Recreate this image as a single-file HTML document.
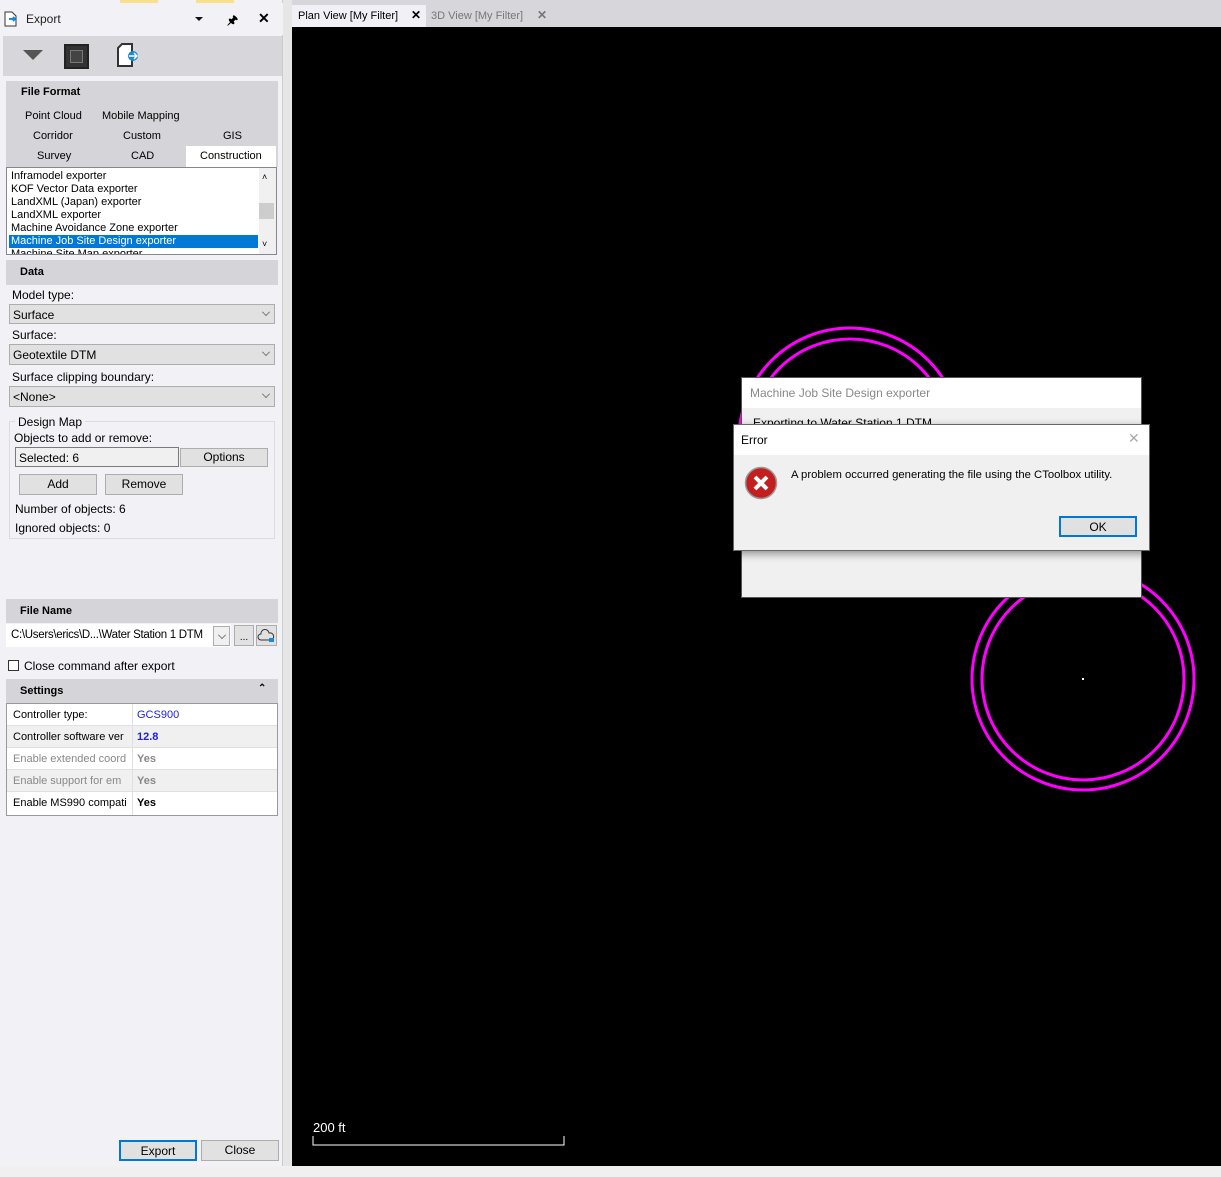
<!DOCTYPE html>
<html><head><meta charset="utf-8"><style>
*{box-sizing:border-box;margin:0;padding:0}
body{width:1221px;height:1177px;position:relative;overflow:hidden;background:#f0f0f0;font-family:"Liberation Sans",sans-serif;font-size:12px;color:#000}
.a{position:absolute}
.sel{background:#e1e1e1;border:1px solid #adadad}
.hdr{background:#d4d4d9;font-weight:bold;font-size:11px;padding-left:14px;line-height:22px}
.btn{background:#e1e1e1;border:1px solid #adadad;text-align:center;font-size:12px}
.chev{position:absolute;right:4px;top:3px;width:8px;height:8px;border-right:1px solid #555;border-bottom:1px solid #555;transform:rotate(45deg) scale(.7)}
</style></head><body>
<div class="a" style="left:0;top:0;width:283px;height:1166px;background:#f2f2f6;border-right:1px solid #ccc"></div>
<div class="a" style="left:283px;top:0;width:9px;height:1166px;background:#e6e6e6"></div>
<div class="a" style="left:120px;top:0;width:38px;height:3px;background:#f8e08c"></div>
<div class="a" style="left:196px;top:0;width:38px;height:3px;background:#f8e08c"></div>
<div class="a" style="left:0;top:3px;width:283px;height:32px;background:#f2f2f6"></div>
<svg class="a" style="left:4px;top:11px" width="14" height="16"><path d="M1 1h7l4 4v10H1z" fill="#fff" stroke="#333"/><path d="M5 8h6M9 6l2 2-2 2" stroke="#1a8ad6" stroke-width="2" fill="none"/></svg>
<div class="a" style="left:26px;top:12px;font-size:12px;color:#222">Export</div>
<div class="a" style="left:195px;top:17px;border:4px solid transparent;border-top:4px solid #111"></div>
<div class="a" style="left:227px;top:11px;font-size:12px;font-weight:bold">&#x1F588;</div>
<div class="a" style="left:258px;top:10px;font-size:14px;font-weight:bold">✕</div>
<div class="a" style="left:3px;top:36px;width:279px;height:40px;background:#d6d6db"></div>
<div class="a" style="left:23px;top:50px;border:10px solid transparent;border-top:10px solid #555;border-bottom:0"></div>
<div class="a" style="left:64px;top:44px;width:25px;height:25px;background:#333;border:2px solid #222"><div style="margin:4px;width:13px;height:13px;background:#444;border:1px solid #777"></div></div>
<svg class="a" style="left:116px;top:43px" width="24" height="27"><path d="M2 5l4-4h10v22H2z" fill="#fff" stroke="#333" stroke-width="2"/><circle cx="17" cy="13" r="5" fill="#1a8ad6"/><path d="M13 13h8M18 10l3 3-3 3" stroke="#fff" stroke-width="1.5" fill="none"/></svg>
<div class="a" style="left:6px;top:81px;width:272px;height:86px;background:#d4d4d9"></div>
<div class="a" style="left:21px;top:86px;font-weight:bold;font-size:11px">File Format</div>
<div class="a" style="left:25px;top:110px;font-size:11px">Point Cloud</div>
<div class="a" style="left:102px;top:110px;font-size:11px">Mobile Mapping</div>
<div class="a" style="left:33px;top:130px;font-size:11px">Corridor</div>
<div class="a" style="left:123px;top:130px;font-size:11px">Custom</div>
<div class="a" style="left:223px;top:130px;font-size:11px">GIS</div>
<div class="a" style="left:37px;top:150px;font-size:11px">Survey</div>
<div class="a" style="left:131px;top:150px;font-size:11px">CAD</div>
<div class="a" style="left:186px;top:146px;width:90px;height:21px;background:#fff"></div>
<div class="a" style="left:200px;top:150px;font-size:11px">Construction</div>
<div class="a" style="left:6px;top:167px;width:271px;height:88px;background:#fff;border:1px solid #828790;overflow:hidden;font-size:11px;line-height:13px">
<div style="padding-left:4px;padding-top:2px">Inframodel exporter<br>KOF Vector Data exporter<br>LandXML (Japan) exporter<br>LandXML exporter<br>Machine Avoidance Zone exporter</div>
<div style="margin-left:2px;width:249px;background:#0078d7;color:#fff;padding-left:2px">Machine Job Site Design exporter</div>
<div style="padding-left:4px">Machine Site Map exporter</div>
<div class="a" style="left:252px;top:0;width:17px;height:86px;background:#f0f0f0"></div>
<div class="a" style="left:252px;top:35px;width:15px;height:16px;background:#cdcdcd"></div>
<div class="a" style="left:255px;top:3px;font-size:9px">˄</div>
<div class="a" style="left:255px;top:70px;font-size:9px">˅</div>
</div>
<div class="a hdr" style="left:6px;top:260px;width:272px;height:25px;line-height:25px">Data</div>
<div class="a" style="left:12px;top:288px">Model type:</div>
<div class="a sel" style="left:9px;top:304px;width:266px;height:20px;padding:3px 3px">Surface<span class="chev"></span></div>
<div class="a" style="left:12px;top:328px">Surface:</div>
<div class="a sel" style="left:9px;top:344px;width:266px;height:21px;padding:3px 3px">Geotextile DTM<span class="chev"></span></div>
<div class="a" style="left:12px;top:370px">Surface clipping boundary:</div>
<div class="a sel" style="left:9px;top:386px;width:266px;height:21px;padding:3px 3px">&lt;None&gt;<span class="chev"></span></div>
<div class="a" style="left:9px;top:421px;width:266px;height:118px;border:1px solid #dcdcdc"></div>
<div class="a" style="left:15px;top:415px;background:#f2f2f6;padding:0 3px">Design Map</div>
<div class="a" style="left:14px;top:431px">Objects to add or remove:</div>
<div class="a" style="left:15px;top:447px;width:164px;height:20px;border:1px solid #7a7a7a;background:#f0f0f0;padding:3px 3px">Selected: 6</div>
<div class="a btn" style="left:180px;top:448px;width:88px;height:19px;line-height:17px">Options</div>
<div class="a btn" style="left:19px;top:474px;width:78px;height:21px;line-height:19px">Add</div>
<div class="a btn" style="left:105px;top:474px;width:78px;height:21px;line-height:19px">Remove</div>
<div class="a" style="left:15px;top:502px">Number of objects: 6</div>
<div class="a" style="left:15px;top:521px">Ignored objects: 0</div>
<div class="a hdr" style="left:6px;top:599px;width:272px;height:24px;line-height:24px">File Name</div>
<div class="a" style="left:6px;top:624px;width:225px;height:23px;background:#fff"></div>
<div class="a" style="left:11px;top:629px;font-size:11.5px;letter-spacing:-0.3px;white-space:nowrap">C:\Users\erics\D...\Water Station 1 DTM</div>
<div class="a" style="left:213px;top:626px;width:17px;height:20px;border:1px solid #adadad;background:#f0f0f0"><span class="chev" style="right:3px;top:4px"></span></div>
<div class="a btn" style="left:234px;top:625px;width:20px;height:21px;line-height:24px;font-size:10px">...</div>
<div class="a btn" style="left:256px;top:625px;width:21px;height:21px"><svg width="19" height="19"><path d="M4 14a3 3 0 010-6 4 4 0 018-1 3 3 0 012 7z" fill="none" stroke="#333"/><rect x="12" y="12" width="5" height="4" fill="#1a8ad6"/></svg></div>
<div class="a" style="left:8px;top:660px;width:11px;height:11px;border:1px solid #333;background:#fff"></div>
<div class="a" style="left:24px;top:659px">Close command after export</div>
<div class="a hdr" style="left:6px;top:679px;width:272px;height:24px;line-height:24px">Settings</div>
<div class="a" style="left:258px;top:683px;font-size:10px;font-weight:bold">⌃</div>
<div class="a" style="left:6px;top:703px;width:272px;height:113px;border:1px solid #999;background:#fff;font-size:11px">
<div style="height:22px;border-bottom:1px solid #e0e0e0;position:relative"><span class="a" style="left:6px;top:5px">Controller type:</span><span class="a" style="left:130px;top:5px;color:#2020e0">GCS900</span></div>
<div style="height:22px;border-bottom:1px solid #e0e0e0;position:relative;background:#f0f0f0"><span class="a" style="left:6px;top:5px">Controller software ver</span><span class="a" style="left:130px;top:5px;color:#2020e0;font-weight:bold">12.8</span></div>
<div style="height:22px;border-bottom:1px solid #e0e0e0;position:relative"><span class="a" style="left:6px;top:5px;color:#888">Enable extended coord</span><span class="a" style="left:130px;top:5px;color:#888;font-weight:bold">Yes</span></div>
<div style="height:22px;border-bottom:1px solid #e0e0e0;position:relative;background:#f0f0f0"><span class="a" style="left:6px;top:5px;color:#888">Enable support for em</span><span class="a" style="left:130px;top:5px;color:#888;font-weight:bold">Yes</span></div>
<div style="height:22px;position:relative"><span class="a" style="left:6px;top:5px">Enable MS990 compati</span><span class="a" style="left:130px;top:5px;font-weight:bold">Yes</span></div>
<div class="a" style="left:125px;top:0;width:1px;height:111px;background:#e0e0e0"></div>
</div>
<div class="a btn" style="left:119px;top:1140px;width:78px;height:21px;line-height:19px;border:2px solid #0078d7">Export</div>
<div class="a btn" style="left:201px;top:1140px;width:78px;height:21px;line-height:19px">Close</div>
<div class="a" style="left:292px;top:0;width:929px;height:27px;background:#d6d6db"></div>
<div class="a" style="left:292px;top:5px;width:134px;height:22px;background:#f0f0f6"></div>
<div class="a" style="left:298px;top:10px;font-size:11px">Plan View [My Filter]</div>
<div class="a" style="left:411px;top:8px;font-size:12px;font-weight:bold">✕</div>
<div class="a" style="left:431px;top:10px;font-size:11px;color:#777">3D View [My Filter]</div>
<div class="a" style="left:537px;top:8px;font-size:12px;font-weight:bold;color:#777">✕</div>
<div class="a" style="left:292px;top:27px;width:929px;height:1139px;background:#000"></div>
<svg class="a" style="left:292px;top:27px" width="929" height="1139">
<g fill="none" stroke="#f0f" stroke-width="3">
<circle cx="558" cy="412" r="111"/><circle cx="558" cy="412" r="100"/>
<circle cx="791" cy="652" r="111"/><circle cx="791" cy="652" r="101"/>
</g>
<rect x="790" y="651" width="2" height="2" fill="#fff"/>
<text x="21" y="1105" fill="#fff" font-family="Liberation Sans" font-size="13">200 ft</text>
<path d="M21 1109v9h251v-9" stroke="#fff" fill="none"/>
</svg>
<div class="a" style="left:741px;top:377px;width:401px;height:221px;background:#f0f0f0;border:1px solid #555"></div>
<div class="a" style="left:742px;top:378px;width:399px;height:30px;background:#fff"></div>
<div class="a" style="left:750px;top:386px;font-size:12px;color:#888">Machine Job Site Design exporter</div>
<div class="a" style="left:753px;top:416px;font-size:12px">Exporting to Water Station 1 DTM</div>
<div class="a" style="left:733px;top:424px;width:417px;height:127px;background:#f0f0f0;border:1px solid #666;box-shadow:0 3px 8px rgba(0,0,0,.4)"></div>
<div class="a" style="left:734px;top:425px;width:415px;height:30px;background:#fff"></div>
<div class="a" style="left:741px;top:433px;font-size:12px">Error</div>
<div class="a" style="left:1128px;top:430px;font-size:14px;color:#aaa">✕</div>
<svg class="a" style="left:744px;top:466px" width="34" height="34"><circle cx="17" cy="17" r="15.5" fill="#c41f1f" stroke="#999" stroke-width="1.5"/><path d="M11 11l12 12M23 11L11 23" stroke="#fff" stroke-width="4"/></svg>
<div class="a" style="left:791px;top:469px;font-size:11.3px">A problem occurred generating the file using the CToolbox utility.</div>
<div class="a btn" style="left:1059px;top:516px;width:78px;height:21px;line-height:18px;border:2px solid #0078d7">OK</div>
</body></html>
